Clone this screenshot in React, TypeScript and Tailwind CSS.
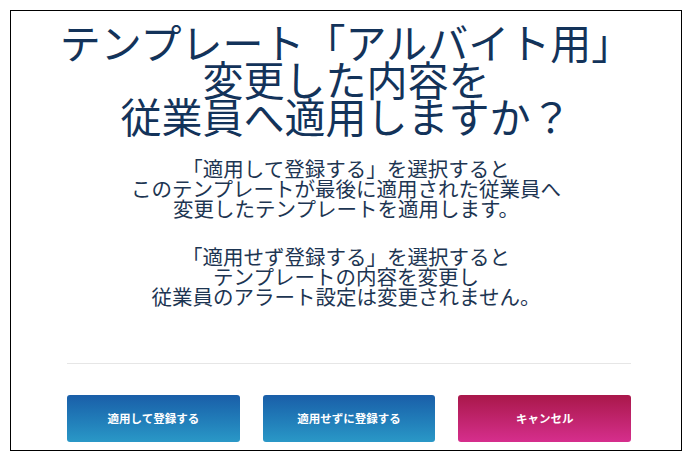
import React from "react";

const jp = "font-['Noto_Sans_CJK_JP','Noto_Sans',sans-serif]";

export default function App() {
  return (
    <div className={`min-h-screen bg-white p-[10px] ${jp}`}>
      <div className="flex h-[441px] w-[672px] flex-col border border-black">
        <h1 className="mt-[12px] text-center text-[41px] font-normal leading-[37px] text-[#13335a]">
          テンプレート「アルバイト用」
          <br />
          変更した内容を
          <br />
          従業員へ適用しますか？
        </h1>

        <div className="mt-[24px] flex flex-col gap-[28px] text-center text-[20.5px] leading-[20px] text-[#1d3552]">
          <p>
            「適用して登録する」を選択すると
            <br />
            このテンプレートが最後に適用された従業員へ
            <br />
            変更したテンプレートを適用します。
          </p>
          <p>
            「適用せず登録する」を選択すると
            <br />
            テンプレートの内容を変更し
            <br />
            従業員のアラート設定は変更されません。
          </p>
        </div>

        <div className="ml-[56px] mr-[50px] mt-auto border-t border-[#e6e6e6]" />

        <div className="mb-[8px] ml-[56px] mr-[50px] mt-[31px] flex gap-[23px]">
          <button className="h-[47px] w-[173px] rounded-[3px] bg-gradient-to-b from-[#1a5ea8] to-[#2a98c7] text-[11.5px] font-bold text-white">
            適用して登録する
          </button>
          <button className="h-[47px] w-[173px] rounded-[3px] bg-gradient-to-b from-[#1a5ea8] to-[#2a98c7] text-[11.5px] font-bold text-white">
            適用せずに登録する
          </button>
          <button className="h-[47px] w-[173px] rounded-[3px] bg-gradient-to-b from-[#a9174a] to-[#d62e8d] text-[11.5px] font-bold text-white">
            キャンセル
          </button>
        </div>
      </div>
    </div>
  );
}
